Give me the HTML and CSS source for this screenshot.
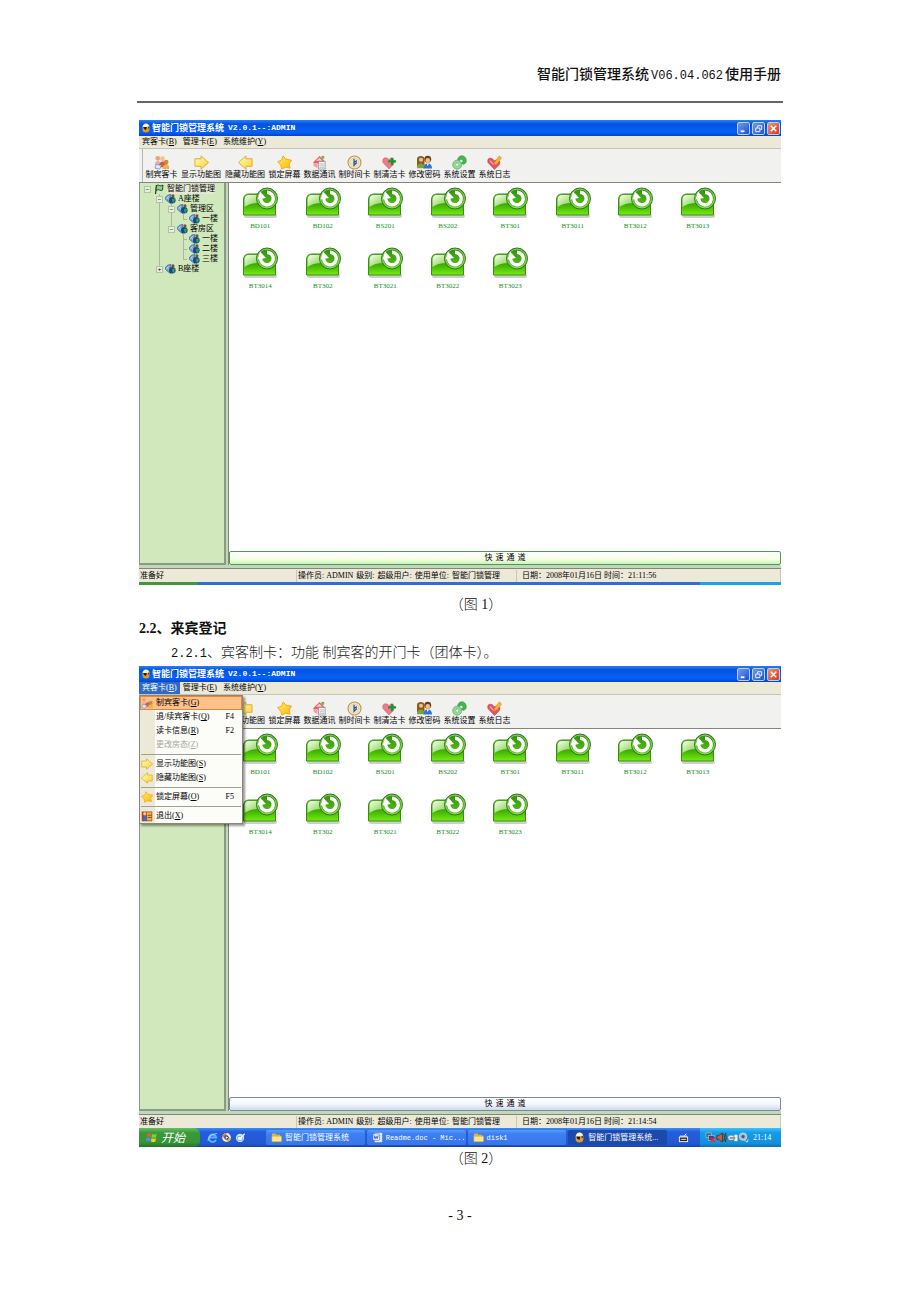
FILE: index.html
```html
<!DOCTYPE html>
<html lang="zh-CN">
<head>
<meta charset="utf-8">
<title>智能门锁管理系统使用手册</title>
<link rel="stylesheet" href="styles.css">
</head>
<body>
<svg class="defs" aria-hidden="true">
  <defs>
    <linearGradient id="g-green" x1="0" y1="0" x2="0" y2="1"><stop offset="0" stop-color="#5cb81c"/><stop offset=".5" stop-color="#3fae04"/><stop offset="1" stop-color="#74ee10"/></linearGradient>
    <linearGradient id="g-shine" x1="0" y1="0" x2="1" y2="1"><stop offset="0" stop-color="#f8fff0"/><stop offset="1" stop-color="#6cc62c"/></linearGradient>
    <linearGradient id="g-ring" x1="0" y1="0" x2="0" y2="1"><stop offset="0" stop-color="#2f8d10"/><stop offset="1" stop-color="#5cc814"/></linearGradient>
    <linearGradient id="g-gold" x1="0" y1="0" x2="1" y2="1"><stop offset="0" stop-color="#fffcb4"/><stop offset="1" stop-color="#ffd23c"/></linearGradient>
    <linearGradient id="g-star" x1="0" y1="0" x2="1" y2="1"><stop offset="0" stop-color="#fff25a"/><stop offset="1" stop-color="#ffb410"/></linearGradient>
    <symbol id="i-room" viewBox="0 0 38 32">
      <rect x="3" y="27" width="33" height="4" rx="2" fill="#b9b9b9" opacity=".7"/>
      <path d="M2.500 28V13Q2.500 7 8 7H31Q34.500 7 34.500 10V28Z" fill="url(#g-green)" stroke="#3c8c18"/>
      <path d="M3.500 19V13Q3.500 8 8 8H21L17 16Q9 16 3.500 20Z" fill="url(#g-shine)"/>
      <circle cx="26" cy="11.500" r="10.500" fill="url(#g-ring)" stroke="#2e7a16"/>
      <circle cx="26" cy="11.500" r="9.400" fill="none" stroke="#a5d88a" stroke-width=".8"/>
      <path d="M26 5.200A6.300 6.300 0 1 1 20 9.500" fill="none" stroke="#fff" stroke-width="3.400"/>
      <path d="M16.500 12.500 19 4.500 25 11Z" fill="#fff"/>
    </symbol>
    <symbol id="i-app" viewBox="0 0 10 10"><path d="M1.500 4H8.500V7Q8 9.500 5 9.500T1.500 7Z" fill="#e09a2a"/><path d="M1.500 4Q2 .5 5 .5T8.500 4L7 5H3Z" fill="#fff3c4"/><path d="M2 4H6L5 7Q3 7 2 4Z" fill="#2c1b08"/><circle cx="7.500" cy="4.500" r="1" fill="#7c3d05"/></symbol>
    <symbol id="i-guests" viewBox="0 0 16 16"><circle cx="4" cy="3.500" r="2.500" fill="#e7a37a"/><circle cx="9" cy="4" r="2.600" fill="#f1c48a"/><path d="M1 10Q1 6 5 6L8 10Z" fill="#f4aaa4"/><path d="M5 13Q5 7 10 7T14 13Z" fill="#d9583b"/><circle cx="13" cy="7.500" r="2.500" fill="#c98c43"/><path d="M9 15Q9 10 13 10T16 15Z" fill="#e5b93f"/><path d="M2 10 8 11 6 15 1 14Z" fill="#dfe9ff" stroke="#6688cc" stroke-width=".8"/></symbol>
    <symbol id="i-right" viewBox="0 0 16 16"><path d="M1 4H7.500V1L15.500 8 7.500 15V12H1Z" fill="url(#g-gold)" stroke="#dfa82e" stroke-linejoin="round"/></symbol>
    <symbol id="i-left" viewBox="0 0 16 16"><path d="M15 4H8.500V1L.5 8 8.500 15V12H15Z" fill="url(#g-gold)" stroke="#dfa82e" stroke-linejoin="round"/></symbol>
    <symbol id="i-star" viewBox="0 0 16 16"><path d="M6.500 1 9.500 4.500 15.500 5.500 13 9.500 14 14 9 13 5 15 4 11 .8 7 5 5.500Z" fill="url(#g-star)" stroke="#f6a41c" stroke-linejoin="round"/></symbol>
    <symbol id="i-comm" viewBox="0 0 16 16"><path d="M1 8 8 1 14 7 12 9H3Z" fill="#e9606c"/><path d="M4 6 8 3 11 6Z" fill="#ffc3c6"/><rect x="7" y="7" width="7" height="8" fill="#f2f2f2" stroke="#929292" stroke-width=".8"/><path d="M8 9.500H13M8 11.500H13M8 13.500H13" stroke="#aaa" stroke-width=".7"/><rect x="10" y="1" width="3" height="3" fill="#68b93b"/><path d="M1 9H6V14L2 12Z" fill="#f0a3a6"/></symbol>
    <symbol id="i-clock" viewBox="0 0 16 16"><circle cx="8" cy="8" r="6.900" fill="#fff6cc" stroke="#b9964a" stroke-width="1.200"/><circle cx="8" cy="8" r="5" fill="#dfe7ec" stroke="#e4c97b" stroke-width=".9"/><path d="M7.500 4V11L10.500 8M7.500 8 10.500 6" fill="none" stroke="#3c4c68" stroke-width="1.300"/></symbol>
    <symbol id="i-heartplus" viewBox="0 0 16 16"><path d="M7.500 15 1 8Q0 3 4 3 6.500 3 7.500 5 9 2 12 4 14.500 7 12 10Z" fill="#ed7a8a" stroke="#cf5768" stroke-width=".6"/><path d="M9.500 3H12V5.500H15V8H12V11H9.500V8H6.500V5.500H9.500Z" fill="#1f9433"/></symbol>
    <symbol id="i-users" viewBox="0 0 16 16"><path d="M0 12V4Q.5 1 4 1T8 4V12Z" fill="#8c5a18"/><circle cx="4.300" cy="5" r="2.200" fill="#f2c08a"/><path d="M0 14Q0 9 4 9T8 14Z" fill="#7aa33a"/><circle cx="11.500" cy="4.500" r="3.600" fill="#6d3d12"/><circle cx="11.500" cy="5.800" r="2.500" fill="#f3bd83"/><path d="M7 14.500Q7 9 11.500 9T16 14.500Z" fill="#2f74cf"/><path d="M10.500 9H12.500L11.500 12Z" fill="#fff"/></symbol>
    <symbol id="i-gear" viewBox="0 0 16 16"><path d="M6 5Q7 0 12 1 16 3 15 8L12.500 10 9.500 8.500 12 7.500Q12 4 9 4.500L8 6Z" fill="#3fbb4a" stroke="#2b8a36" stroke-width=".6"/><circle cx="5.500" cy="10.300" r="3.300" fill="none" stroke="#8edc90" stroke-width="2.800"/><circle cx="5.500" cy="10.300" r="4.800" fill="none" stroke="#4da356" stroke-width=".7"/><circle cx="5.500" cy="10.300" r="1.700" fill="#fff" stroke="#4da356" stroke-width=".6"/></symbol>
    <symbol id="i-log" viewBox="0 0 16 16"><path d="M8 15.500 1 8Q0 3 4 3.500 6 3.500 7.500 6L12 5Q15 7 13 10.500Z" fill="#e25766" stroke="#bd3446" stroke-width=".6"/><path d="M3 6 7 10" stroke="#f7a9b2" stroke-width="1.300"/><path d="M8 8 13 1 15.500 3 10.500 9.500 7.500 10.500Z" fill="#ffb52c" stroke="#e07c13" stroke-width=".6"/></symbol>
    <symbol id="i-exit" viewBox="0 0 16 16"><rect x="1" y="2" width="14" height="13" fill="#a8431f"/><rect x="8" y="3" width="6" height="11" fill="#f2b33b"/><circle cx="5" cy="5" r="2.200" fill="#f0c69b"/><path d="M2 14 4 8H8L7 11 9 14Z" fill="#3f6bd0"/><path d="M9 7H14M9 10H14" stroke="#5b2d12"/></symbol>
    <symbol id="i-flag" viewBox="0 0 10 10"><path d="M1.500 10 2.500 1" stroke="#173d1a" stroke-width="1.200"/><path d="M2.500 1.500Q4 .5 5.500 1.500T9 1L8.500 6Q7 7 5.500 6T2 6.500Z" fill="#8fd08f" stroke="#173d1a" stroke-width=".9"/></symbol>
    <symbol id="i-globe" viewBox="0 0 11 10"><path d="M0 5Q1 .5 6 .5V9.500Q4 9 0 5Z" fill="#6f9fd4" stroke="#34557f" stroke-width=".6"/><path d="M2 3 5 7M1 5.500 4 2" stroke="#d5e6f7" stroke-width=".6"/><circle cx="7.300" cy="6.200" r="3.300" fill="#174a83"/><path d="M7 5 10 4.500 9 9 7.500 8Z" fill="#2da558"/><circle cx="8" cy="1.800" r="1.500" fill="#8c4a1c"/></symbol>
    <symbol id="i-win" viewBox="0 0 12 12"><path d="M1 2Q3 .5 5.500 2L5 5.500Q3 4.500.5 5.500Z" fill="#f0562c"/><path d="M6.500 2.300Q9 3.500 11.500 2L11 5.600Q8.500 7 6 5.800Z" fill="#84cf31"/><path d="M.3 6.500Q3 5.500 5 6.600L4.400 10Q2 9 0 10Z" fill="#4a91f2"/><path d="M5.900 6.900Q8.500 8 10.900 6.700L10.300 10.300Q8 11.500 5.400 10.300Z" fill="#fbcb26"/></symbol>
    <symbol id="i-ie" viewBox="0 0 12 12"><path d="M9.700 8.500A4 4 0 1 1 10 6H3" fill="none" stroke="#5cb6ff" stroke-width="2"/><path d="M1 10Q1 3 11 1.500" fill="none" stroke="#cdeaff" stroke-width=".7"/></symbol>
    <symbol id="i-media" viewBox="0 0 12 12"><circle cx="6" cy="6" r="4.800" fill="#f6f1e4"/><path d="M6 1.200A4.800 4.800 0 0 0 1.200 6H6Z" fill="#ea7b29"/><path d="M6 10.800A4.800 4.800 0 0 0 10.800 6H6Z" fill="#e9b63c"/><circle cx="6" cy="6" r="2.500" fill="#28488f"/><path d="M5.200 4.500 7.800 6 5.200 7.500Z" fill="#fff"/></symbol>
    <symbol id="i-desk" viewBox="0 0 12 12"><circle cx="5.500" cy="6.500" r="4.500" fill="#bfe4f5"/><path d="M3 5H8V9H3Z" fill="#fff" stroke="#5082b8" stroke-width=".6"/><path d="M5 8 10.500 2" stroke="#e9f6ff" stroke-width="1.500"/></symbol>
    <symbol id="i-folder" viewBox="0 0 12 12"><path d="M1 3Q1 1.500 2 1.500H5L6 3H10V6H1Z" fill="#e7b531"/><path d="M1 10.500V4.500H11.500V9.500Q11.500 10.500 10.500 10.500Z" fill="#ffe893" stroke="#dba428" stroke-width=".6"/></symbol>
    <symbol id="i-doc" viewBox="0 0 12 12"><rect x="3" y="1" width="8" height="10" fill="#fff" stroke="#8da9dd" stroke-width=".6"/><path d="M9 4H10M9 6H10M9 8H10" stroke="#6c8dc9" stroke-width=".7"/><rect x="1" y="2" width="7" height="7" fill="#dfe9ff" stroke="#4066b8" stroke-width=".6"/><path d="M2.300 3.800 3.300 7.300 4.500 4.800 5.700 7.300 6.700 3.800" fill="none" stroke="#2b53ad" stroke-width=".9"/></symbol>
    <symbol id="i-ime" viewBox="0 0 12 12"><path d="M2 4.500H10" stroke="#fff"/><rect x="1.500" y="5.500" width="9" height="5" fill="#222" stroke="#f5f5f5"/><path d="M3 8H9" stroke="#f5f5f5"/><path d="M7 4 9 2" stroke="#fff"/></symbol>
    <symbol id="i-net" viewBox="0 0 12 12"><rect x="1" y="1" width="6" height="5" fill="#53618a" stroke="#c2cbe8" stroke-width=".6"/><rect x="4" y="4" width="6" height="5" fill="#36457b" stroke="#c2cbe8" stroke-width=".6"/><path d="M6 6 11 11M11 6 6 11" stroke="#ee2b24" stroke-width="1.600"/></symbol>
    <symbol id="i-sound" viewBox="0 0 12 12"><path d="M1 4H3L7 1V11L3 8H1Z" fill="#c8623a" stroke="#4b2412" stroke-width=".8"/><path d="M8.500 2Q10 6 8.500 10M10.300 1Q12 6 10.300 11" fill="none" stroke="#4b2412" stroke-width="1"/></symbol>
    <symbol id="i-usb" viewBox="0 0 12 12"><rect x="1" y="3.500" width="7" height="5.500" rx="2.500" fill="#e4e4e4" stroke="#666" stroke-width=".5"/><rect x="8" y="3" width="3.500" height="7" fill="#eceff2"/><path d="M3 6.500H9" stroke="#444"/></symbol>
    <symbol id="i-mouse" viewBox="0 0 12 12"><circle cx="5.500" cy="5" r="4" fill="#a9b4c2" stroke="#e9edf2" stroke-width=".8"/><circle cx="5.500" cy="5" r="1.700" fill="#4b596c"/><path d="M7 9 10 11 11 8" stroke="#dce2ea" fill="none"/></symbol>
  </defs>
</svg>

<div class="page">
  <header class="page-head">智能门锁管理系统<span class="version">V06.04.062</span>使用手册</header>

  <main>
    <figure>
      <section class="window">
        <div class="titlebar">
          <svg class="ico-10"><use href="#i-app"/></svg>
          <span class="title">智能门锁管理系统</span><span class="title-ver">V2.0.1--:ADMIN</span>
          <div class="win-btns">
            <button aria-label="最小化"><svg viewBox="0 0 12 12"><path d="M3 9H7" stroke="#fff" stroke-width="2"/></svg></button>
            <button aria-label="还原"><svg viewBox="0 0 12 12"><path d="M5 5V3H9.500V7H8M3 5.500H7.500V9.500H3Z" fill="none" stroke="#fff"/></svg></button>
            <button class="close" aria-label="关闭"><svg viewBox="0 0 12 12"><path d="M3 3 9 9M9 3 3 9" stroke="#fff" stroke-width="1.600"/></svg></button>
          </div>
        </div>
        <nav class="menubar">
          <button>宾客卡(<u>B</u>)</button><button>管理卡(<u>E</u>)</button><button>系统维护(<u>Y</u>)</button>
        </nav>
        <div class="toolbar">
          <button><svg><use href="#i-guests"/></svg>制宾客卡</button>
          <button class="wide"><svg><use href="#i-right"/></svg>显示功能图</button>
          <button class="wide"><svg><use href="#i-left"/></svg>隐藏功能图</button>
          <button><svg><use href="#i-star"/></svg>锁定屏幕</button>
          <button><svg><use href="#i-comm"/></svg>数据通讯</button>
          <button><svg><use href="#i-clock"/></svg>制时间卡</button>
          <button><svg><use href="#i-heartplus"/></svg>制清洁卡</button>
          <button><svg><use href="#i-users"/></svg>修改密码</button>
          <button><svg><use href="#i-gear"/></svg>系统设置</button>
          <button><svg><use href="#i-log"/></svg>系统日志</button>
        </div>
        <div class="workspace">
          <aside class="sidebar">
            <ul class="tree">
              <li><div class="node"><button class="exp" aria-label="折叠">−</button><svg class="ico-10"><use href="#i-flag"/></svg><span class="root">智能门锁管理</span></div>
                <ul>
                  <li><div class="node"><button class="exp" aria-label="折叠">−</button><svg class="ico-11"><use href="#i-globe"/></svg><span>A座楼</span></div>
                    <ul>
                      <li><div class="node"><button class="exp" aria-label="折叠">−</button><svg class="ico-11"><use href="#i-globe"/></svg><span>管理区</span></div>
                        <ul><li><div class="node"><i class="stub"></i><svg class="ico-11"><use href="#i-globe"/></svg><span>一楼</span></div></li></ul>
                      </li>
                      <li><div class="node"><button class="exp" aria-label="折叠">−</button><svg class="ico-11"><use href="#i-globe"/></svg><span>客房区</span></div>
                        <ul>
                          <li><div class="node"><i class="stub"></i><svg class="ico-11"><use href="#i-globe"/></svg><span>一楼</span></div></li>
                          <li><div class="node"><i class="stub"></i><svg class="ico-11"><use href="#i-globe"/></svg><span>二楼</span></div></li>
                          <li><div class="node"><i class="stub"></i><svg class="ico-11"><use href="#i-globe"/></svg><span>三楼</span></div></li>
                        </ul>
                      </li>
                    </ul>
                  </li>
                  <li><div class="node"><button class="exp" aria-label="展开">+</button><svg class="ico-11"><use href="#i-globe"/></svg><span>B座楼</span></div></li>
                </ul>
              </li>
            </ul>
          </aside>
          <div class="content">
            <ul class="rooms">
              <li><svg><use href="#i-room"/></svg>BD101</li><li><svg><use href="#i-room"/></svg>BD102</li><li><svg><use href="#i-room"/></svg>BS201</li><li><svg><use href="#i-room"/></svg>BS202</li><li><svg><use href="#i-room"/></svg>BT301</li><li><svg><use href="#i-room"/></svg>BT3011</li><li><svg><use href="#i-room"/></svg>BT3012</li><li><svg><use href="#i-room"/></svg>BT3013</li>
              <li><svg><use href="#i-room"/></svg>BT3014</li><li><svg><use href="#i-room"/></svg>BT302</li><li><svg><use href="#i-room"/></svg>BT3021</li><li><svg><use href="#i-room"/></svg>BT3022</li><li><svg><use href="#i-room"/></svg>BT3023</li>
            </ul>
            <button class="channel hot">快 速 通 道</button>
          </div>
        </div>
        <div class="status">
          <span>准备好</span>
          <span class="fields"><span>操作员: ADMIN</span><span>级别:</span><span>超级用户:</span><span>使用单位:</span><span>智能门锁管理</span></span>
          <span class="date">日期：2008年01月16日 时间：21:11:56</span>
        </div>
        <div class="edge"><i class="edge-start"></i><i class="edge-tray"></i></div>
      </section>
      <figcaption class="caption first">（图 1）</figcaption>
    </figure>

    <h2>2.2、来宾登记</h2>
    <p class="para"><span class="num">2.2.1</span>、宾客制卡：功能 制宾客的开门卡（团体卡）。</p>

    <figure>
      <section class="window">
        <div class="titlebar">
          <svg class="ico-10"><use href="#i-app"/></svg>
          <span class="title">智能门锁管理系统</span><span class="title-ver">V2.0.1--:ADMIN</span>
          <div class="win-btns">
            <button aria-label="最小化"><svg viewBox="0 0 12 12"><path d="M3 9H7" stroke="#fff" stroke-width="2"/></svg></button>
            <button aria-label="还原"><svg viewBox="0 0 12 12"><path d="M5 5V3H9.500V7H8M3 5.500H7.500V9.500H3Z" fill="none" stroke="#fff"/></svg></button>
            <button class="close" aria-label="关闭"><svg viewBox="0 0 12 12"><path d="M3 3 9 9M9 3 3 9" stroke="#fff" stroke-width="1.600"/></svg></button>
          </div>
        </div>
        <nav class="menubar">
          <button class="open">宾客卡(<u>B</u>)</button><button>管理卡(<u>E</u>)</button><button>系统维护(<u>Y</u>)</button>
          <div class="dropdown">
            <button class="hover"><svg><use href="#i-guests"/></svg><span>制宾客卡(<u>G</u>)</span></button>
            <button><i></i><span>退/续宾客卡(<u>Q</u>)</span><kbd>F4</kbd></button>
            <button><i></i><span>读卡信息(<u>R</u>)</span><kbd>F2</kbd></button>
            <button disabled><i></i><span>更改房态(<u>Z</u>)</span></button>
            <hr>
            <button><svg><use href="#i-right"/></svg><span>显示功能图(<u>S</u>)</span></button>
            <button><svg><use href="#i-left"/></svg><span>隐藏功能图(<u>S</u>)</span></button>
            <hr>
            <button><svg><use href="#i-star"/></svg><span>锁定屏幕(<u>O</u>)</span><kbd>F5</kbd></button>
            <hr>
            <button><svg><use href="#i-exit"/></svg><span>退出(<u>X</u>)</span></button>
          </div>
        </nav>
        <div class="toolbar">
          <button><svg><use href="#i-guests"/></svg>制宾客卡</button>
          <button class="wide"><svg><use href="#i-right"/></svg>显示功能图</button>
          <button class="wide"><svg><use href="#i-left"/></svg>隐藏功能图</button>
          <button><svg><use href="#i-star"/></svg>锁定屏幕</button>
          <button><svg><use href="#i-comm"/></svg>数据通讯</button>
          <button><svg><use href="#i-clock"/></svg>制时间卡</button>
          <button><svg><use href="#i-heartplus"/></svg>制清洁卡</button>
          <button><svg><use href="#i-users"/></svg>修改密码</button>
          <button><svg><use href="#i-gear"/></svg>系统设置</button>
          <button><svg><use href="#i-log"/></svg>系统日志</button>
        </div>
        <div class="workspace">
          <aside class="sidebar"></aside>
          <div class="content">
            <ul class="rooms">
              <li><svg><use href="#i-room"/></svg>BD101</li><li><svg><use href="#i-room"/></svg>BD102</li><li><svg><use href="#i-room"/></svg>BS201</li><li><svg><use href="#i-room"/></svg>BS202</li><li><svg><use href="#i-room"/></svg>BT301</li><li><svg><use href="#i-room"/></svg>BT3011</li><li><svg><use href="#i-room"/></svg>BT3012</li><li><svg><use href="#i-room"/></svg>BT3013</li>
              <li><svg><use href="#i-room"/></svg>BT3014</li><li><svg><use href="#i-room"/></svg>BT302</li><li><svg><use href="#i-room"/></svg>BT3021</li><li><svg><use href="#i-room"/></svg>BT3022</li><li><svg><use href="#i-room"/></svg>BT3023</li>
            </ul>
            <button class="channel">快 速 通 道</button>
          </div>
        </div>
        <div class="status">
          <span>准备好</span>
          <span class="fields"><span>操作员: ADMIN</span><span>级别:</span><span>超级用户:</span><span>使用单位:</span><span>智能门锁管理</span></span>
          <span class="date">日期：2008年01月16日 时间：21:14:54</span>
        </div>
        <div class="taskbar">
          <button class="start"><svg><use href="#i-win"/></svg>开始</button>
          <div class="quick"><svg><use href="#i-ie"/></svg><svg><use href="#i-media"/></svg><svg><use href="#i-desk"/></svg></div>
          <div class="tasks">
            <button><svg><use href="#i-folder"/></svg>智能门锁管理系统</button>
            <button><svg><use href="#i-doc"/></svg><span class="mono">Readme.doc - Mic...</span></button>
            <button><svg><use href="#i-folder"/></svg><span class="mono">disk1</span></button>
            <button class="active"><svg><use href="#i-app"/></svg>智能门锁管理系统...</button>
          </div>
          <div class="ime"><svg><use href="#i-ime"/></svg></div>
          <div class="tray"><svg><use href="#i-net"/></svg><svg><use href="#i-sound"/></svg><svg><use href="#i-usb"/></svg><svg><use href="#i-mouse"/></svg><time>21:14</time></div>
        </div>
      </section>
      <figcaption class="caption">（图 2）</figcaption>
    </figure>
  </main>

  <footer>- 3 -</footer>
</div>
</body>
</html>
```
FILE: styles.css
```css
* { box-sizing: border-box; }
body { margin: 0; background: #fff; color: #111; font: 300 14px/24px "Liberation Serif", "Noto Sans CJK SC", serif; }
.defs { position: absolute; width: 0; height: 0; }
figure, h2, p, ul { margin: 0; padding: 0; }
ul { list-style: none; }
svg { flex: none; display: block; }
button { margin: 0; padding: 0; border: 0; background: none; color: inherit; font: inherit; text-align: left; white-space: nowrap; }

.page { padding: 63px 139px; }
.page-head { margin: 0 -2px 17px; padding: 0 2px 13px; border-bottom: 2px solid #666; text-align: right; font-weight: 500; }
.version { margin: 0 2px; font-family: "Liberation Mono", monospace; font-size: 12px; }
.caption { padding-left: 32px; text-align: center; }
.caption.first { margin-top: 8px; }
h2 { font-size: 14px; font-weight: 700; }
.para { padding-left: 32px; }
.num { font-family: "Liberation Mono", monospace; font-size: 12px; }
footer { margin-top: 33px; text-align: center; }

.window { font: 400 8px/10px "Liberation Serif", "Noto Sans CJK SC", sans-serif; color: #000; background: #ece9d8; }
.ico-10 { width: 10px; height: 10px; }
.ico-11 { width: 11px; height: 10px; }

.titlebar { display: flex; align-items: center; height: 16px; padding: 0 1px 0 2px; color: #fff; background: linear-gradient(#2a7ff5, #0553e0 25%, #0560fb 75%, #0347c4); font-weight: 700; }
.title { margin-left: 1px; font-size: 9px; }
.title-ver { margin-left: 4px; font-family: "Liberation Mono", monospace; }
.win-btns { display: flex; gap: 2px; margin-left: auto; }
.win-btns button { width: 13px; height: 13px; border: 1px solid #b9cdf6; border-radius: 2px; background: linear-gradient(135deg, #6f9cf5, #1c50d0); }
.win-btns .close { background: linear-gradient(135deg, #f0927a, #d23a12); }
.win-btns svg { width: 11px; height: 11px; }

.menubar { position: relative; display: flex; height: 13px; border-bottom: 1px solid #c5c3b6; }
.menubar > button { padding: 0 3px; }
.menubar > .open { color: #fff; background: #316ac5; }

.toolbar { display: flex; height: 34px; padding: 6px 0 0 5px; background: linear-gradient(90deg, transparent 3px, #b5b5b5 3px, #b5b5b5 4px, transparent 4px) no-repeat, #f1f1f0; border-bottom: 1px solid #85857a; }
.toolbar button { display: flex; flex-direction: column; align-items: center; width: 35px; }
.toolbar .wide { width: 44px; }
.toolbar svg { width: 15px; height: 15px; }

.workspace { display: flex; gap: 2px; min-height: 386px; padding-bottom: 3px; border-bottom: 1px solid #85857a; background: #bfd8bc; }
.sidebar { width: 87px; border: 1px solid #8b9a83; border-width: 0 2px 2px 1px; background: #d0e8bc; }
.content { flex: 1; display: flex; flex-direction: column; border-left: 1px solid #85857a; background: #fff; }
.tree { padding: 1px 0 0 4px; }
.tree ul { margin-left: 12px; }
.tree ul > li { background: linear-gradient(#a9b89d, #a9b89d) 3px 0 / 1px 100% no-repeat; }
.tree ul > li:last-child { background-size: 1px 5px; }
.node { display: flex; align-items: center; gap: 2px; height: 10px; }
.node .ico-10 { margin: 0 1px; }
.exp { width: 7px; height: 7px; border: 1px solid #b4c0a8; background: #e4f0d8; font: 6px/5px "Liberation Sans", sans-serif; text-align: center; }
.stub { width: 7px; height: 1px; background: linear-gradient(90deg, transparent 3px, #a9b89d 3px); }
.root { background: #e6e8d8; }

.rooms { flex: 1; display: grid; grid-template-columns: repeat(8, 1fr); grid-auto-rows: 60px; padding: 4px 52px 0 0; color: #149020; font-size: 7px; }
.rooms li { display: flex; flex-direction: column; align-items: center; gap: 2px; }
.rooms svg { width: 38px; height: 32px; }
.channel { height: 14px; border: 1px solid #7a8a9a; border-radius: 2px; background: linear-gradient(#fff, #f4f6fc 50%, #cfdaf0); text-align: center; word-spacing: 1px; }
.channel.hot { border-color: #4f9a4c; background: linear-gradient(#fff, #f6ffe6 60%, #c8f5b8); }

.status { display: grid; grid-template-columns: 158px 220px 1fr; height: 13px; align-items: center; white-space: nowrap; }
.status > span { padding: 1px; border-right: 1px solid #c9c6b5; }
.fields { display: flex; gap: 3px; }
.status .date { padding-left: 5px; }
.edge { display: flex; justify-content: space-between; height: 3px; background: #2a6ee0; }
.edge-start { width: 59px; background: #3a9a3c; }
.edge-tray { width: 81px; background: #18a4ec; }

.dropdown { position: absolute; z-index: 1; top: 13px; left: 0; width: 104px; border: 1px solid #8a867a; background: linear-gradient(90deg, #ece9d8 15px, #fcfcf9 15px); box-shadow: 2px 2px 2px #0006; }
.dropdown button { display: flex; align-items: center; gap: 3px; width: 100%; height: 14px; padding: 0 8px 0 1px; }
.dropdown svg, .dropdown i { width: 12px; height: 12px; }
.dropdown .hover { background: #ffc08a; outline: 1px solid #d98a45; outline-offset: -1px; }
.dropdown button:disabled { color: #aaa79b; }
.dropdown kbd { margin-left: auto; font: inherit; }
.dropdown hr { margin: 2px 1px; border: 0; border-top: 1px solid #a19e92; }

.taskbar { display: flex; height: 19px; color: #fff; background: linear-gradient(#3f8cf3, #245edb 20%, #2258d2 85%, #1941a5); }
.taskbar svg { width: 11px; height: 11px; }
.taskbar .start { display: flex; align-items: center; gap: 4px; width: 61px; padding-left: 7px; border-radius: 0 6px 6px 0; background: linear-gradient(#6cba68, #389a38 25%, #379537 75%, #267326); font-size: 12px; font-style: italic; }
.quick { display: flex; align-items: center; gap: 3px; width: 66px; padding-left: 7px; }
.tasks { flex: 1; display: grid; grid-template-columns: repeat(4, 1fr); gap: 2px; padding: 2px 0; }
.tasks button { display: flex; align-items: center; gap: 3px; padding-left: 5px; border-radius: 2px; background: linear-gradient(#5b9bff, #3c80f2 25%, #3876ea); }
.tasks .active { padding-left: 6px; background: #1c49ac; }
.mono { font-family: "Liberation Mono", monospace; font-size: 7px; }
.ime { display: grid; place-items: center; width: 33px; }
.tray { display: flex; align-items: center; width: 81px; padding-left: 5px; background: linear-gradient(#3fc0f8, #139bea 25%, #1290dd 80%, #0f72b8); }
.tray time { margin-left: 4px; }
```
